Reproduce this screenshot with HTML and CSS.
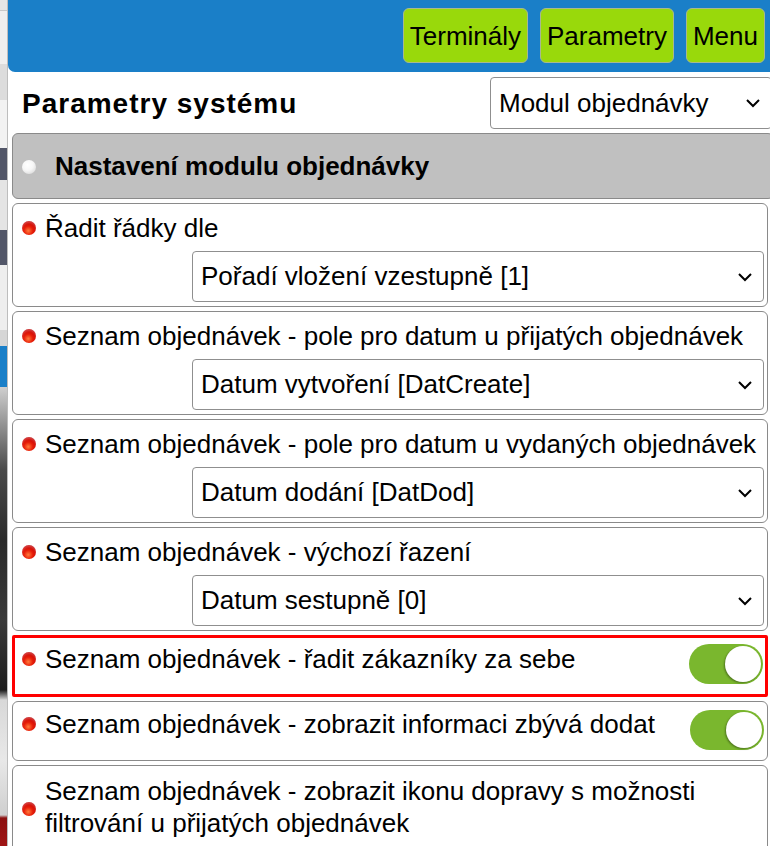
FILE: index.html
```html
<!DOCTYPE html>
<html lang="cs">
<head>
<meta charset="utf-8">
<title>Parametry systému</title>
<link rel="stylesheet" href="styles.css">
</head>
<body>
<div class="page">
  <div class="backdrop"></div>
  <div class="panel">
    <header class="topbar">
      <nav class="nav">
        <button class="navbtn">Terminály</button>
        <button class="navbtn">Parametry</button>
        <button class="navbtn">Menu</button>
      </nav>
    </header>

    <div class="titlerow">
      <h1 class="title">Parametry systému</h1>
      <div class="select select-module">
        <span class="select-text">Modul objednávky</span>
        <svg class="chev" viewBox="0 0 16 10" width="16" height="10"><path d="M2 2 L8 8 L14 2" fill="none" stroke="#000" stroke-width="2"/></svg>
      </div>
    </div>

    <div class="section-head">
      <span class="dot dot-white"></span>
      <span>Nastavení modulu objednávky</span>
    </div>

    <div class="card card-select">
      <div class="label"><span class="dot dot-red"></span><span>Řadit řádky dle</span></div>
      <div class="select select-value">
        <span class="select-text">Pořadí vložení vzestupně [1]</span>
        <svg class="chev" viewBox="0 0 16 10" width="16" height="10"><path d="M2 2 L8 8 L14 2" fill="none" stroke="#000" stroke-width="2"/></svg>
      </div>
    </div>

    <div class="card card-select">
      <div class="label"><span class="dot dot-red"></span><span>Seznam objednávek - pole pro datum u přijatých objednávek</span></div>
      <div class="select select-value">
        <span class="select-text">Datum vytvoření [DatCreate]</span>
        <svg class="chev" viewBox="0 0 16 10" width="16" height="10"><path d="M2 2 L8 8 L14 2" fill="none" stroke="#000" stroke-width="2"/></svg>
      </div>
    </div>

    <div class="card card-select">
      <div class="label"><span class="dot dot-red"></span><span>Seznam objednávek - pole pro datum u vydaných objednávek</span></div>
      <div class="select select-value">
        <span class="select-text">Datum dodání [DatDod]</span>
        <svg class="chev" viewBox="0 0 16 10" width="16" height="10"><path d="M2 2 L8 8 L14 2" fill="none" stroke="#000" stroke-width="2"/></svg>
      </div>
    </div>

    <div class="card card-select">
      <div class="label"><span class="dot dot-red"></span><span>Seznam objednávek - výchozí řazení</span></div>
      <div class="select select-value">
        <span class="select-text">Datum sestupně [0]</span>
        <svg class="chev" viewBox="0 0 16 10" width="16" height="10"><path d="M2 2 L8 8 L14 2" fill="none" stroke="#000" stroke-width="2"/></svg>
      </div>
    </div>

    <div class="card card-toggle card-highlight">
      <div class="label"><span class="dot dot-red"></span><span>Seznam objednávek - řadit zákazníky za sebe</span></div>
      <span class="toggle"><span class="knob"></span></span>
    </div>

    <div class="card card-toggle">
      <div class="label"><span class="dot dot-red"></span><span>Seznam objednávek - zobrazit informaci zbývá dodat</span></div>
      <span class="toggle"><span class="knob"></span></span>
    </div>

    <div class="card card-multi">
      <span class="dot dot-red"></span>
      <span class="multi-text">Seznam objednávek - zobrazit ikonu dopravy s možnosti filtrování u přijatých objednávek</span>
    </div>
  </div>
</div>
</body>
</html>
```

FILE: styles.css
```css
html, body {
  margin: 0;
  padding: 0;
  background: #fff;
  overflow: hidden;
}

body {
  font-family: "Liberation Sans", Arial, sans-serif;
  color: #000;
  width: 770px;
  height: 846px;
}

.page {
  display: flex;
  height: 846px;
  overflow: hidden;
}

.backdrop {
  flex: 0 0 7px;
  border-right: 1px solid #bdbdbd;
  background: linear-gradient(to bottom,
    #e6e6e6 0px, #e6e6e6 10px, #c8c8c8 10px, #c8c8c8 11px,
    #efefef 11px, #efefef 64px, #dcdcdc 64px, #dcdcdc 100px,
    #f2f2f2 100px, #f2f2f2 148px, #525668 148px, #525668 180px,
    #e4e4e4 180px, #e4e4e4 230px, #525668 230px, #525668 265px,
    #eeeeee 265px, #eeeeee 330px, #d6d6d6 330px, #d6d6d6 346px,
    #1a7fc8 346px, #1a7fc8 387px, #cfcfcf 387px, #8a8a8a 430px,
    #4a4a4a 470px, #2a2a2a 540px, #3a3a3a 620px, #1c1c1c 690px,
    #d8d8d8 700px, #e8e8e8 760px, #cfcfcf 815px,
    #8b1010 818px, #a01515 846px);
}

.panel {
  flex: 1 1 auto;
  min-width: 0;
  overflow: hidden;
}

/* top bar */
.topbar {
  height: 72px;
  background: #1a7fc8;
  border-bottom-left-radius: 7px;
  display: flex;
  justify-content: flex-end;
  align-items: flex-start;
  box-sizing: border-box;
  padding: 8px 5px 0 0;
}

.nav {
  display: flex;
  gap: 12px;
}

.navbtn {
  font-family: "Liberation Sans", Arial, sans-serif;
  font-size: 26px;
  color: #000;
  background: #99d90b;
  border: 1px solid #a8b890;
  border-radius: 6px;
  height: 55px;
  padding: 1px 6px 0;
  margin: 0;
}

/* title row */
.titlerow {
  display: flex;
  justify-content: space-between;
  align-items: flex-start;
  padding: 5px 0 4px 14px;
}

.title {
  margin: 11px 0 0 0;
  font-size: 28px;
  font-weight: bold;
  letter-spacing: 1px;
  line-height: 32px;
}

.select {
  display: flex;
  align-items: center;
  justify-content: space-between;
  box-sizing: border-box;
  border: 1px solid #8f8f8f;
  border-radius: 4px;
  background: #fff;
  font-size: 26px;
  padding: 0 10px 0 8px;
}

.select-module {
  width: 282px;
  height: 52px;
  margin-right: -2px;
}

.chev {
  flex: 0 0 auto;
}

/* section header */
.section-head {
  margin-left: 4px;
  height: 66px;
  box-sizing: border-box;
  background: #c0c0c0;
  border: 1px solid #8a8a8a;
  border-radius: 6px;
  display: flex;
  align-items: center;
  padding-left: 9px;
  padding-top: 1px;
  font-size: 26px;
  font-weight: bold;
  margin-bottom: 4px;
  margin-right: -4px;
}

.section-head .dot {
  margin-right: 19px;
}

.dot {
  flex: 0 0 auto;
  display: inline-block;
  width: 14px;
  height: 14px;
  border-radius: 50%;
}

.dot-white {
  background: radial-gradient(circle at 40% 35%, #ffffff 0%, #f6f6f6 45%, #cfcfcf 100%);
}

.dot-red {
  background: radial-gradient(circle at 45% 70%, #ff7a3a 0%, #e8200a 35%, #c80000 70%, #900000 100%);
  box-shadow: inset 0 2px 2px rgba(255, 255, 255, 0.25);
}

/* cards */
.card {
  margin: 0 2px 4px 4px;
  border: 1px solid #8a8a8a;
  border-radius: 6px;
  background: #fff;
  box-sizing: border-box;
  font-size: 26px;
}

.label {
  display: flex;
  align-items: center;
  gap: 9px;
  line-height: 30px;
}

.card-select {
  height: 104px;
  padding: 9px 3px 0 9px;
}

.card-select .select-value {
  margin: 8px 0 0 auto;
  width: 572px;
  height: 51px;
  padding-left: 8px;
  padding-right: 10px;
}

.card-toggle {
  height: 60px;
  display: flex;
  justify-content: space-between;
  align-items: flex-start;
  padding: 7px 3px 0 9px;
}

.card-highlight {
  border: 3px solid #ff0000;
  border-radius: 2px;
  height: 62px;
  padding: 6px 2px 0 7px;
  margin-top: 2px;
}

.toggle {
  position: relative;
  flex: 0 0 auto;
  width: 74px;
  height: 40px;
  border-radius: 20px;
  background: #7ab72e;
  margin-top: 1px;
}

.card-highlight .toggle {
  margin-top: 0;
}

.knob {
  position: absolute;
  right: 2px;
  top: 2px;
  width: 36px;
  height: 36px;
  border-radius: 50%;
  background: #fff;
  box-shadow: -1px 1px 2px rgba(0, 0, 0, 0.35);
}

.card-multi {
  height: 90px;
  display: flex;
  align-items: flex-start;
  padding: 9px 3px 0 9px;
  gap: 9px;
  margin-bottom: 0;
}

.card-multi .dot {
  margin-top: 27px;
}

.multi-text {
  line-height: 32px;
}
```
